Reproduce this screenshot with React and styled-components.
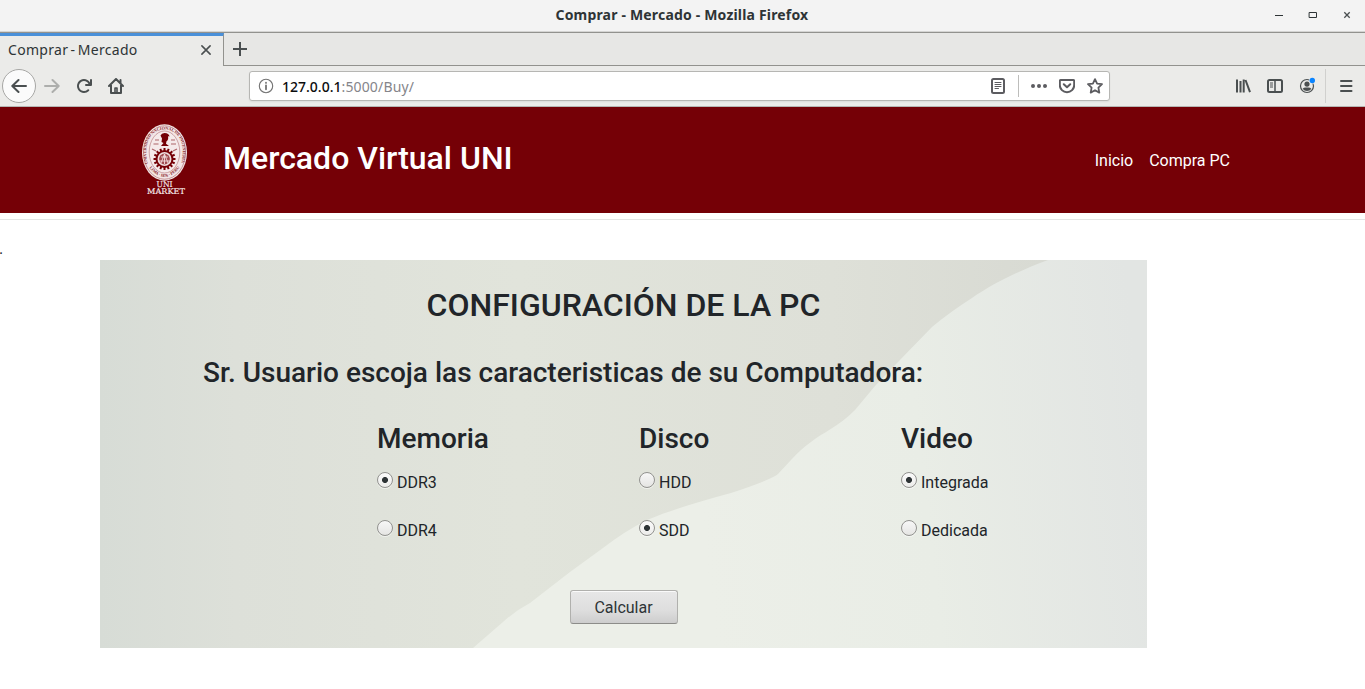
import React from "react";
import styled, { createGlobalStyle } from "styled-components";

const Global = createGlobalStyle`
  * { box-sizing: border-box; }
  body { margin: 0; background: #fff; color: #212529; font: 16px/24px Roboto, sans-serif; overflow: hidden; }
  h1, h2, p { margin: 0; font-weight: 500; }
`;

const ui = `"Noto Sans", "Open Sans", sans-serif`;

const Window = styled.div`
  display: flex;
  flex-direction: column;
  width: 1365px;
  height: 689px;
  overflow: hidden;
`;

const TitleBar = styled.div`
  display: grid;
  grid-template-columns: 1fr auto 1fr;
  align-items: center;
  height: 33px;
  padding-bottom: 3px;
  background: #f3f3f3;
  border-bottom: 1px solid #92928e;
  box-shadow: inset 0 -1px #d5d5d3;
`;

const WindowTitle = styled.div`
  grid-column: 2;
  width: 253px;
  margin-right: 1px;
  white-space: nowrap;
  color: #2e3436;
  font: 700 14px/20px ${ui};
  letter-spacing: 0.18px;
`;

const WindowControls = styled.div`
  display: flex;
  justify-content: flex-end;
  gap: 18px;
  padding-right: 10px;
`;

const TabBar = styled.div`
  display: flex;
  height: 33px;
  background: #e7e7e5;
`;

const Tab = styled.div`
  display: flex;
  align-items: center;
  justify-content: space-between;
  width: 224px;
  padding: 0 11px 2px 8px;
  border-top: 3px solid #4a90d9;
  border-right: 1px solid #92928e;
  background: #ebebe9;
  color: #2e3436;
  font: 14px/20px ${ui};
  letter-spacing: 0.3px;
  word-spacing: -1.6px;
`;

const TabRest = styled.div`
  display: flex;
  flex: 1;
  padding: 8px 0 0 8px;
  border-bottom: 1px solid #92928e;
`;

const NavBar = styled.div`
  display: flex;
  align-items: center;
  height: 41px;
  background: #ebebe9;
  border-bottom: 1px solid #b6b6b3;
`;

const NavButtons = styled.div`
  display: flex;
  align-items: center;
  gap: 16px;
  width: 249px;
  padding-left: 2px;
`;

const BackButton = styled.div`
  display: grid;
  place-items: center;
  width: 34px;
  height: 34px;
  margin-right: -8px;
  border: 1px solid #a7a7a5;
  border-radius: 50%;
  background: #fbfbfb;
`;

const AddressBar = styled.div`
  display: flex;
  align-items: center;
  width: 861px;
  height: 30px;
  padding: 0 6px 0 8px;
  border: 1px solid #b6b6b3;
  border-radius: 3px;
  background: #fff;
  box-shadow: 0 1px 2px #0001;
`;

const Url = styled.div`
  flex: 1;
  padding: 2px 0 0 8px;
  color: #85858a;
  font: 14px/20px ${ui};
  letter-spacing: 0.15px;
  b { color: #0c0c0d; font-weight: 500; letter-spacing: 0; }
`;

const PageActions = styled.div`
  display: flex;
  align-items: center;
  gap: 12px;
`;

const Divider = styled.span`
  width: 1px;
  height: ${(p) => p.$height}px;
  background: ${(p) => p.$color};
`;

const Tools = styled.div`
  display: flex;
  align-items: center;
  gap: 16px;
  margin-left: auto;
  padding-right: 11px;
  & > ${Divider} { margin: 0 -4px 0 -6px; }
`;

const SiteHeader = styled.header`
  display: flex;
  align-items: center;
  height: 106px;
  padding: 0 135px 0 141px;
  background: #750006;
  color: #fff;
`;

const Brand = styled.h1`
  margin: -4px 0 0 32px;
  font: 500 32px/38px Roboto, sans-serif;
`;

const Links = styled.nav`
  display: flex;
  gap: 16px;
  margin: 2px 0 0 auto;
`;

const Link = styled.a`
  color: #fff;
  text-decoration: none;
`;

const Rule = styled.hr`
  width: 100%;
  margin: 6px 0 0;
  border: 0;
  border-top: 1px solid #e5e5e5;
`;

const Dot = styled.div`
  height: 23px;
  margin: 17px 0 0 -1px;
`;

const Panel = styled.main`
  display: grid;
  grid-template-columns: 1047px;
  width: 1047px;
  height: 388px;
  margin-left: 100px;
  & > * { grid-area: 1 / 1; }
`;

const Form = styled.form`
  position: relative;
  display: flex;
  flex-direction: column;
  align-items: center;
  padding-top: 26px;
`;

const Title = styled.h1`
  font-size: 32px;
  line-height: 38px;
`;

const Lead = styled.h2`
  align-self: flex-start;
  margin: 32px 0 0 103px;
  font-size: 28px;
  line-height: 34px;
`;

const Groups = styled.div`
  display: grid;
  grid-template-columns: 262px 262px 200px;
  align-self: flex-start;
  margin: 32px 0 0 277px;
`;

const Group = styled.div`
  display: flex;
  flex-direction: column;
`;

const GroupTitle = styled.h2`
  margin-bottom: 15px;
  font-size: 28px;
  line-height: 34px;
`;

const Option = styled.label`
  display: flex;
  gap: 4px;
  height: 24px;
  margin-bottom: 24px;
`;

const Radio = styled.input`
  appearance: none;
  width: 16px;
  height: 16px;
  margin: 1px 0 0;
  border: 1px solid #92928f;
  border-radius: 50%;
  background: linear-gradient(#f7f7f7, #e5e5e3);
  box-shadow: 0 1px #fff8;
  &:checked { background: radial-gradient(circle, #2e3436 2.6px, transparent 3.4px), linear-gradient(#fbfbfb, #ececea); }
`;

const Submit = styled.button`
  width: 108px;
  height: 34px;
  margin-top: 23px;
  padding: 2px 0 0;
  border: 1px solid #b0b0ad;
  border-bottom-color: #8c8c89;
  border-radius: 3px;
  background: linear-gradient(#e7e7e7, #dedede 60%, #cdcdcd);
  box-shadow: inset 0 1px #fafafa;
  color: #2e3436;
  font: 16px/24px Roboto, sans-serif;
`;

const Svg = ({ size = 16, color = "#4a4f50", children, ...rest }) => (
  <svg width={size} height={size} viewBox="0 0 16 16" fill="none" stroke={color} strokeWidth="2" strokeLinecap="round" strokeLinejoin="round" {...rest}>
    {children}
  </svg>
);

const Arrow = ({ flip, color }) => (
  <Svg color={color}><path d="M15 8H1.5M7.5 2 1.3 8l6.2 6" transform={flip ? "translate(16) scale(-1 1)" : undefined} /></Svg>
);

function Crest() {
  const teeth = Array.from({ length: 16 }, (_, i) => i * 22.5);
  return (
    <svg width="50" height="74" viewBox="0 0 50 74">
      <defs>
        <path id="upperRing" d="M7 42C1 17 12 6.5 23.5 6.5S46 17 40 42" />
        <path id="lowerRing" d="M7 43Q23.5 65 40 43" />
      </defs>
      <ellipse cx="23.5" cy="29.5" rx="22.5" ry="28.2" fill="#f3e6e6" />
      <ellipse cx="23.5" cy="29.5" rx="21" ry="26.7" fill="none" stroke="#98444a" strokeWidth=".5" />
      <ellipse cx="23.5" cy="29" rx="15.3" ry="21" fill="#f5eaea" stroke="#a35a5f" strokeWidth=".5" />
      <g fill="#8d2c32" fontFamily="Liberation Serif, serif" fontSize="4.3" fontWeight="700">
        <text><textPath href="#upperRing" startOffset="1" textLength="88">UNIVERSIDAD NACIONAL DE INGENIERIA</textPath></text>
        <text><textPath href="#lowerRing" startOffset="2" textLength="37">LIMA · 1876 · PERU</textPath></text>
      </g>
      <path d="M19.5 12.5q1-2.500 4-2.500 4.500 0 5 3.500l-1.500-.3q.8 3.500-1.500 5l-.5 2.500 3 2.300h-8l2.500-3-2-1 .5-3.500z" fill="#750006" />
      <path d="M14 17h4M30 17h4M12.5 21h5M30 21h5M11 26l4 2M36 26l-4 2" stroke="#ad6469" strokeWidth="1.2" />
      <g stroke="#750006" strokeWidth="2">
        {teeth.map((a) => <path key={a} d="M23.5 25v3" transform={`rotate(${a} 23.5 36)`} />)}
      </g>
      <circle cx="23.5" cy="36" r="8" fill="#eedede" stroke="#750006" strokeWidth="2" />
      <circle cx="23.5" cy="36" r="5.4" fill="#a14b50" />
      <path d="m20 40 3.5-9 3.5 9M20 34h7M23.5 31v10M18 38h11" stroke="#f1dddd" strokeWidth=".9" fill="none" />
      <g fill="#f8eeee" stroke="#f8eeee" strokeWidth=".15" fontFamily="DejaVu Serif, serif" fontSize="7.8" textAnchor="middle">
        <text x="23.5" y="63.8" textLength="16" lengthAdjust="spacingAndGlyphs">UNI</text>
        <text x="25" y="71.3" textLength="38" lengthAdjust="spacingAndGlyphs">MARKET</text>
      </g>
    </svg>
  );
}

function Backdrop() {
  return (
    <svg width="1047" height="388" viewBox="0 0 1047 388">
      <defs>
        <linearGradient id="shade" x1="0" y1="0" x2="1" y2="0">
          <stop stopColor="#d7dcd6" />
          <stop offset=".13" stopColor="#dde0d9" />
          <stop offset=".4" stopColor="#e1e4db" />
          <stop offset=".7" stopColor="#dee0d8" />
          <stop offset=".9" stopColor="#d8dad3" />
        </linearGradient>
        <linearGradient id="light" gradientUnits="userSpaceOnUse" x1="600" y1="250" x2="1047" y2="200">
          <stop stopColor="#ecefe8" />
          <stop offset=".5" stopColor="#e9ede6" />
          <stop offset="1" stopColor="#e2e5e3" />
        </linearGradient>
      </defs>
      <path fill="url(#shade)" d="M0 0h1047v388H0z" />
      <path fill="url(#light)" d="M948 0C916 12 894 23 872 38Q850 52 832 67L799 101 775 126 755 150C738 167 722 173 711 182Q701 189 691 200L678 214Q673 219 631 233C601 241 571 250 547 260Q525 271 503 288L470 312 430 343Q415 351 403 362L373 388H1047V0z" />
    </svg>
  );
}

const groups = [
  { title: "Memoria", name: "memoria", options: ["DDR3", "DDR4"], selected: "DDR3" },
  { title: "Disco", name: "disco", options: ["HDD", "SDD"], selected: "SDD" },
  { title: "Video", name: "video", options: ["Integrada", "Dedicada"], selected: "Integrada" },
];

function Browser() {
  return (
    <>
      <TitleBar>
        <WindowTitle>Comprar - Mercado - Mozilla Firefox</WindowTitle>
        <WindowControls>
          <Svg color="#2e3436" strokeLinecap="butt" strokeWidth="1"><path d="M4 8.5h8" /></Svg>
          <Svg color="#2e3436" strokeLinejoin="miter" strokeWidth="1"><path d="M4.5 5.5h7v5h-7z" /></Svg>
          <Svg color="#4a4f50" strokeLinecap="butt" strokeWidth="1.3"><path d="m5.3 5.3 5.4 5.4m0-5.4-5.4 5.4" /></Svg>
        </WindowControls>
      </TitleBar>
      <TabBar>
        <Tab>
          Comprar - Mercado
          <Svg size={12} strokeWidth="2.1"><path d="m2.500 2.500 11 11M13.500 2.500l-11 11" /></Svg>
        </Tab>
        <TabRest><Svg strokeLinecap="butt"><path d="M8 1v14M1 8h14" /></Svg></TabRest>
      </TabBar>
      <NavBar>
        <NavButtons>
          <BackButton><Arrow /></BackButton>
          <Arrow flip color="#adaeac" />
          <Svg>
            <path fill="#4a4f50" stroke="none" d="M15 1a1 1 0 0 0-1 1v2.418A6.995 6.995 0 1 0 8 15a6.954 6.954 0 0 0 4.95-2.05 1 1 0 0 0-1.414-1.414A5.019 5.019 0 1 1 12.549 6H10a1 1 0 0 0 0 2h5a1 1 0 0 0 1-1V2a1 1 0 0 0-1-1z" />
          </Svg>
          <Svg><path d="m1 8 7-7 7 7M3 7v8h10V7M12.5 2v3" /><path d="M7 14v-4h2v4" strokeWidth="1.6" /></Svg>
        </NavButtons>
        <AddressBar>
          <Svg color="#737373" strokeWidth="1.1"><circle cx="8" cy="8" r="6.7" /><path d="M8 7.3v4M8 4.7v.2" strokeWidth="1.8" /></Svg>
          <Url><b>127.0.0.1</b>:5000/Buy/</Url>
          <PageActions>
            <Svg color="#5c5c60"><rect x="2" y="1" width="12" height="14" rx="1.5" /><path d="M5 4.5h6M5 6.5h6M5 8.5h6M5 10.5h3.5" strokeWidth="1" /></Svg>
            <Divider $height={22} $color="#bdbdbb" />
            <Svg color="#5c5c60" strokeWidth="4"><path d="M2 8h.01M8 8h.01M14 8h.01" /></Svg>
            <Svg color="#5c5c60"><path d="M1.5 2h13a.7.7 0 0 1 .7.7V7A7.2 7.2 0 0 1 .8 7V2.7a.7.7 0 0 1 .7-.7zM4.8 6.2 8 9.2l3.2-3" /></Svg>
            <Svg color="#5c5c60" strokeWidth="1.8"><path d="m8 1.1 2.1 4.5 4.9.6-3.6 3.4.9 5L8 12.2l-4.3 2.4.9-5L1 6.2l4.9-.6z" /></Svg>
          </PageActions>
        </AddressBar>
        <Tools>
          <Svg strokeLinecap="butt"><path d="M2 1.5v13M5.5 3v11.5M8.7 1.5v13M10.5 2l4.500 12.2" /></Svg>
          <Svg><rect x="1" y="2" width="14" height="12" rx="1.5" /><path d="M8 2v12" strokeWidth="1.5" /><path d="M3.4 5h2.2M3.4 7h2.2M3.4 9h2.2" strokeWidth="1" /></Svg>
          <Svg overflow="visible">
            <circle cx="8" cy="8" r="6.5" strokeWidth="1.2" />
            <circle cx="8" cy="6.1" r="2.6" fill="#4a4f50" stroke="none" />
            <path d="M3.6 10.7q1.2-1.2 3-1.2h2.8q1.8 0 3 1.2A5.3 5.3 0 0 1 3.6 10.7z" fill="#4a4f50" stroke="none" />
            <circle cx="13.3" cy="2.5" r="3.2" fill="#ebebe9" stroke="none" /><circle cx="13.3" cy="2.5" r="2.7" fill="#0a84ff" stroke="none" />
          </Svg>
          <Divider $height={34} $color="#d0d0ce" />
          <Svg><path d="M3 3h10.5M3 8h10.5M3 13h10.5" /></Svg>
        </Tools>
      </NavBar>
    </>
  );
}

export default function App() {
  return (
    <Window>
      <Global />
      <Browser />
      <SiteHeader>
        <Crest />
        <Brand>Mercado Virtual UNI</Brand>
        <Links><Link>Inicio</Link><Link>Compra PC</Link></Links>
      </SiteHeader>
      <Rule />
      <Dot>.</Dot>
      <Panel>
        <Backdrop />
        <Form>
          <Title>CONFIGURACIÓN DE LA PC</Title>
          <Lead>Sr. Usuario escoja las caracteristicas de su Computadora:</Lead>
          <Groups>
            {groups.map((g) => (
              <Group key={g.name}>
                <GroupTitle>{g.title}</GroupTitle>
                {g.options.map((o) => (
                  <Option key={o}><Radio type="radio" name={g.name} defaultChecked={o === g.selected} />{o}</Option>
                ))}
              </Group>
            ))}
          </Groups>
          <Submit type="button">Calcular</Submit>
        </Form>
      </Panel>
    </Window>
  );
}
